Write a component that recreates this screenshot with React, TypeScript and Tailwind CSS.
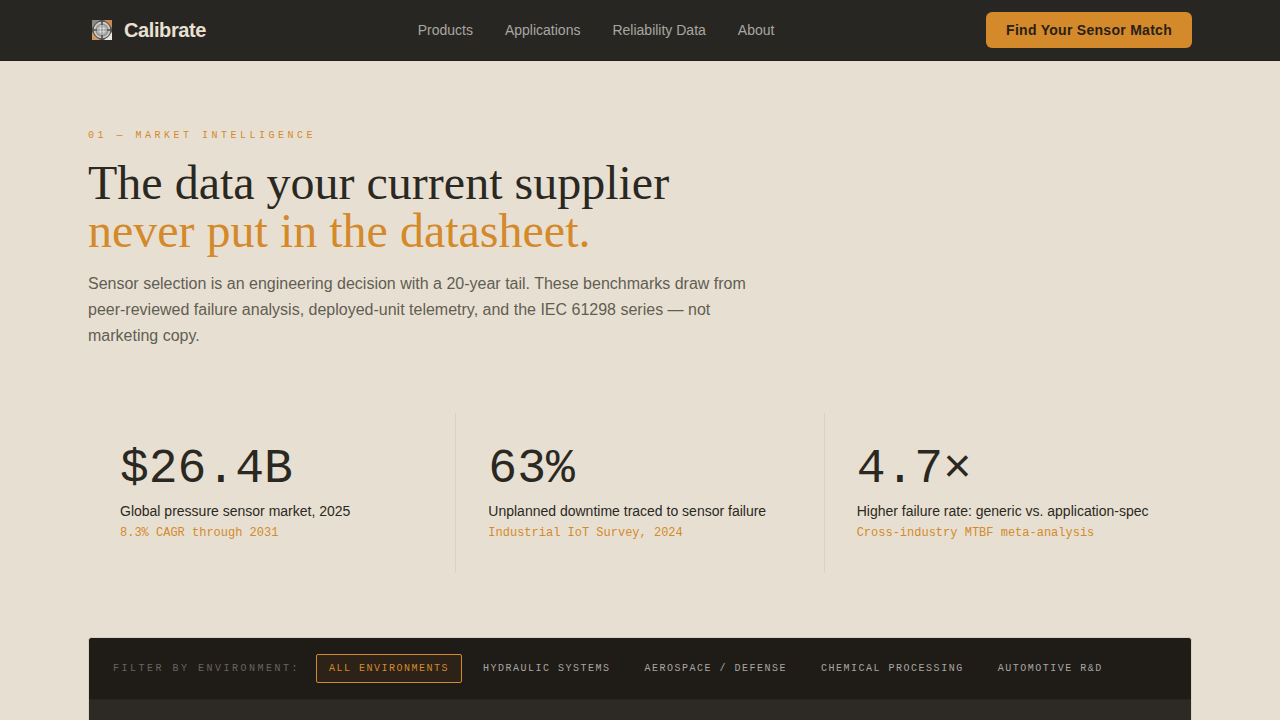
import { useState } from "react";

interface IStat {
  value: string;
  label: string;
  source: string;
}

const NAV_LINKS = ["Products", "Applications", "Reliability Data", "About"];

const STATS: IStat[] = [
  {
    value: "$26.4B",
    label: "Global pressure sensor market, 2025",
    source: "8.3% CAGR through 2031",
  },
  {
    value: "63%",
    label: "Unplanned downtime traced to sensor failure",
    source: "Industrial IoT Survey, 2024",
  },
  {
    value: "4.7×",
    label: "Higher failure rate: generic vs. application-spec",
    source: "Cross-industry MTBF meta-analysis",
  },
];

const ENVIRONMENTS = [
  "All Environments",
  "Hydraulic Systems",
  "Aerospace / Defense",
  "Chemical Processing",
  "Automotive R&D",
];

const Logo = () => (
  <svg className="h-7 w-7" viewBox="0 0 28 28" fill="none" aria-hidden="true">
    <rect x="4" y="4" width="20" height="20" fill="#5d5a54" />
    <path d="M4 4h8l-8 8z" fill="#8d8a84" />
    <path d="M24 4h-8l8 8z" fill="#c98a54" />
    <path d="M4 24h8l-8-8z" fill="#cf9763" />
    <path d="M24 24h-8l8-8z" fill="#e6e5e8" />
    <circle cx="14" cy="14" r="9" fill="#86847e" stroke="#55534e" strokeWidth="1" />
    <circle cx="14" cy="14" r="7.4" fill="#94938e" stroke="#cfcec8" strokeWidth="1.6" />
    <circle cx="14" cy="14" r="5" fill="#c4c5c2" />
    <path d="M14 4v5M14 19v5M4 14h5M19 14h5" stroke="#4c4e50" strokeWidth="1.6" />
    <path d="M14 9v10M9 14h10" stroke="#8e9192" strokeWidth="1" />
    <path d="M11 10v8M17 10v8M10 11h8M10 17h8" stroke="#a3a5a4" strokeWidth="0.6" />
    <circle cx="12.4" cy="12.4" r="1" fill="#e2e2e0" />
    <circle cx="15.6" cy="12.4" r="1" fill="#e2e2e0" />
    <circle cx="12.4" cy="15.6" r="1" fill="#e2e2e0" />
    <circle cx="15.6" cy="15.6" r="1" fill="#e2e2e0" />
  </svg>
);

const Header = () => (
  <header className="border-b border-[#23211d] bg-[#282622]">
    <div className="mx-auto flex max-w-6xl items-center justify-between px-6 py-3">
      <a href="#" className="flex items-center gap-2">
        <Logo />
        <span className="text-xl font-bold tracking-[-0.02em] text-[#e8e0d2]">Calibrate</span>
      </a>
      <nav className="flex items-center gap-8">
        {NAV_LINKS.map((link) => (
          <a key={link} href="#" className="text-sm text-[#a8a6a1]">
            {link}
          </a>
        ))}
      </nav>
      <button
        type="button"
        className="rounded-md bg-[#d4892b] px-5 py-2 text-sm font-bold tracking-[0.02em] text-[#282118]"
      >
        Find Your Sensor Match
      </button>
    </div>
  </header>
);

const StatCard = ({ value, label, source }: IStat) => (
  <div className="bg-[#e7e0d2] p-8">
    <p className="font-['Liberation_Mono',monospace] text-5xl leading-none text-[#2b2822]">{value}</p>
    <p className="mt-2 text-sm text-[#2b2822]">{label}</p>
    <p className="mt-1 font-['Liberation_Mono',monospace] text-xs text-[#d4892b]">{source}</p>
  </div>
);

const FilterPanel = () => {
  const [active, setActive] = useState(ENVIRONMENTS[0]);

  return (
    <section className="mt-16 overflow-hidden rounded-sm border border-[#d9d2c5] bg-[#2d2925]">
      <div className="flex flex-wrap items-center gap-2 border-b border-[#282420] bg-[#1f1c18] px-6 py-4 font-['Liberation_Mono',monospace] text-[10px] leading-[15px] uppercase">
        <span className="mr-2 tracking-[0.25em] text-[#67645f]">Filter by environment:</span>
        {ENVIRONMENTS.map((env) => (
          <button
            key={env}
            type="button"
            onClick={() => setActive(env)}
            className={`rounded-xs border px-3 py-1.5 tracking-[0.15em] uppercase ${
              env === active
                ? "border-[#d4892b] bg-[#2d2217] text-[#d4892b]"
                : "border-transparent text-[#a8a6a1]"
            }`}
          >
            {env}
          </button>
        ))}
      </div>
      <div className="h-96" />
    </section>
  );
};

const App = () => {
  return (
    <div className="h-screen overflow-hidden bg-[#e7e0d2] font-['Liberation_Sans',Arial,sans-serif]">
      <Header />
      <main className="mx-auto max-w-6xl px-6 pt-[67px]">
        <p className="mb-4 font-['Liberation_Mono',monospace] text-[10px] leading-[15px] tracking-[0.35em] text-[#d4892b] uppercase">
          01 — Market Intelligence
        </p>
        <h1 className="mb-4 font-['Liberation_Serif',serif] text-5xl leading-none text-[#2b2822]">
          The data your current supplier
          <br />
          <span className="text-[#d4892b]">never put in the datasheet.</span>
        </h1>
        <p className="max-w-2xl text-base leading-[26px] text-[#625d53]">
          Sensor selection is an engineering decision with a 20-year tail. These benchmarks draw from
          peer-reviewed failure analysis, deployed-unit telemetry, and the IEC 61298 series — not
          marketing copy.
        </p>
        <section className="mt-16 grid grid-cols-3 gap-px bg-[#d9d2c5]">
          {STATS.map((stat) => (
            <StatCard key={stat.value} {...stat} />
          ))}
        </section>
        <FilterPanel />
      </main>
    </div>
  );
};

export default App;
